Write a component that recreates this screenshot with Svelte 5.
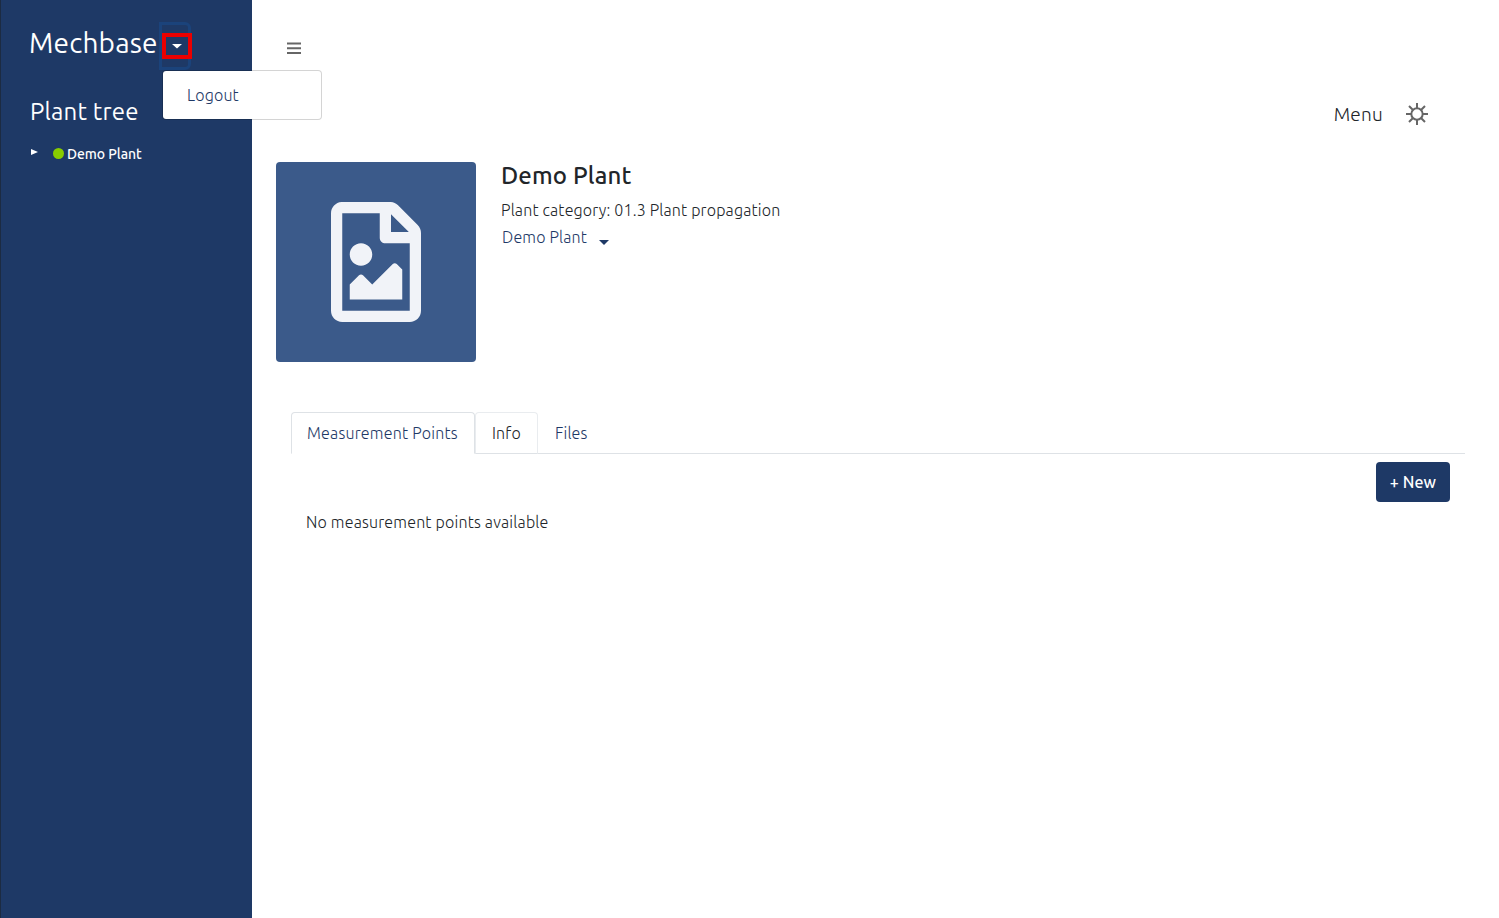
<script>
  let menuOpen = $state(true);
  let tab = $state('Measurement Points');
</script>

<div class="app">
  <aside>
    <div class="brand">
      <span class="name">Mechbase</span>
      <button class="toggle" aria-label="Account" onclick={() => (menuOpen = !menuOpen)}>
        <span class="mark"><svg width="10" height="5" viewBox="0 0 10 5"><path d="M0 0H10L5 4.6Z" /></svg></span>
      </button>
      {#if menuOpen}
        <div class="dropdown"><a href="#logout">Logout</a></div>
      {/if}
    </div>
    <h2>Plant tree</h2>
    <div class="node">
      <svg class="arrow" width="7" height="6" viewBox="0 0 7 6"><path d="M0 0L7 3L0 6Z" /></svg>
      <span class="dot"></span>
      <span class="label">Demo Plant</span>
    </div>
  </aside>

  <main>
    <svg class="burger" width="14" height="12" viewBox="0 0 14 12"><path d="M0 .5h14v2H0zM0 5.2h14v2H0zM0 9.9h14v2H0z" /></svg>
    <div class="menu">
      <span>Menu</span>
      <svg width="22" height="22" viewBox="0 0 22 22">
        <circle cx="11" cy="11" r="5.7" />
        <path d="M11 0V5.5M11 16.5V22M0 11H5.5M16.5 11H22M3 3L7 7M15 15L19 19M19 3L15 7M7 15L3 19" />
      </svg>
    </div>

    <section class="plant">
      <div class="picture">
        <svg width="90" height="120" viewBox="0 0 384 512"><path d="M369.9 97.9L286 14C277 5 264.8-.1 252.1-.1H48C21.5 0 0 21.5 0 48v416c0 26.5 21.5 48 48 48h288c26.5 0 48-21.5 48-48V131.9c0-12.7-5.1-25-14.1-34zM332.1 128H256V51.9l76.1 76.1zM48 464V48h160v104c0 13.3 10.7 24 24 24h104v288H48zm32-48h224V288l-23.5-23.5c-4.7-4.7-12.3-4.7-17 0L176 352l-39.5-39.5c-4.7-4.7-12.3-4.7-17 0L80 352v64zm48-240c-26.5 0-48 21.5-48 48s21.5 48 48 48 48-21.5 48-48-21.5-48-48-48z" /></svg>
      </div>
      <div class="facts">
        <h1>Demo Plant</h1>
        <p>Plant category: 01.3 Plant propagation</p>
        <a class="crumb" href="#plant"><span>Demo Plant</span><svg width="10" height="5" viewBox="0 0 10 5"><path d="M0 0H10L5 5Z" /></svg></a>
      </div>
    </section>

    <nav>
      {#each ['Measurement Points', 'Info', 'Files'] as t, i}
        <button class="tab t{i}" class:active={tab === t} onclick={() => (tab = t)}><span>{t}</span></button>
      {/each}
    </nav>
    <div class="actions"><button class="new"><span>+ New</span></button></div>
    <p class="empty">No measurement points available</p>
  </main>
</div>

<style>
  :global(body) { background: #fff; }
  .app {
    display: flex;
    height: 918px;
    overflow: hidden;
    font: 300 16px/24px Ubuntu, "Noto Sans", sans-serif;
    letter-spacing: 0.17px;
    color: #212529;
  }
  .app * { box-sizing: border-box; }
  h1, h2, p { margin: 0; }
  svg { display: block; flex: none; }
  button { font: inherit; letter-spacing: inherit; margin: 0; padding: 0; border: 0; background: none; white-space: nowrap; }
  a { text-decoration: none; color: #1e3966; }
  aside {
    flex: none;
    width: 252px;
    padding-top: 22px;
    background: #1e3966;
    border-left: 1px solid #1c2b42;
    color: #fff;
  }
  .brand { position: relative; display: flex; height: 48px; padding-left: 28px; }
  .name { width: 130px; font-size: 28px; line-height: 41px; font-weight: 400; letter-spacing: 0.2px; white-space: nowrap; }
  .toggle {
    flex: none;
    width: 32px;
    height: 48px;
    border: 3px solid #1b437b;
    border-radius: 0 6px 6px 0;
  }
  .mark {
    display: flex;
    align-items: center;
    justify-content: center;
    width: 30px;
    height: 26px;
    border: 4px solid #eb0000;
    fill: #fff;
  }
  .dropdown {
    position: absolute;
    z-index: 2;
    left: 161px;
    top: 48px;
    width: 160px;
    height: 50px;
    padding: 12px 0 0 24px;
    background: #fff;
    background-clip: padding-box;
    border: 1px solid rgba(0, 0, 0, 0.17);
    border-radius: 4px;
  }
  h2 { margin-top: 27px; padding-left: 29px; font-size: 24px; line-height: 30px; font-weight: 400; letter-spacing: 0.2px; }
  .node { display: flex; align-items: center; height: 20px; margin-top: 17px; padding-left: 30px; font-size: 14px; font-weight: 500; }
  .arrow { fill: #fff; margin-top: -4px; }
  .dot { width: 11px; height: 11px; margin: -1px 3px 0 15px; border-radius: 50%; background: #8c0; }
  .label { letter-spacing: -0.05px; }
  main { flex: 1; min-width: 0; padding: 42px 34px 0 24px; }
  .burger { margin-left: 11px; fill: #666; }
  .menu { display: flex; justify-content: flex-end; align-items: center; gap: 23px; height: 24px; margin-top: 48px; padding-right: 37px; }
  .menu span { font-size: 19px; letter-spacing: 0.25px; }
  .menu svg { fill: none; stroke: #666; stroke-width: 2; }
  .plant { display: flex; margin-top: 36px; height: 200px; }
  .picture { display: flex; align-items: center; justify-content: center; width: 200px; border-radius: 4px; background: #3b5a8a; fill: #f1f3f8; }
  .facts { padding-left: 25px; white-space: nowrap; }
  h1 { font-size: 24px; line-height: 29px; margin-top: -1px; font-weight: 500; letter-spacing: 0.15px; }
  .facts p { margin-top: 8px; }
  .crumb { display: flex; align-items: center; padding-left: 1px; margin-top: 3px; gap: 12px; fill: #1e3966; }
  .crumb svg { margin-top: 10px; }
  nav { display: flex; height: 42px; margin: 50px 0 0 15px; border-bottom: 1px solid #dee2e6; }
  .tab { height: 42px; border: 1px solid transparent; border-radius: 4px 4px 0 0; color: #1e3966; text-align: left; padding-left: 15px; }
  .t0 { width: 184px; letter-spacing: 0.22px; }
  .t1 { width: 63px; padding-left: 16px; color: #212529; border-color: #e9ecef #e9ecef #dee2e6; }
  .t2 { width: 66px; padding-left: 16px; }
  .active { border-color: #dee2e6 #dee2e6 #fff; background: #fff; }
  .actions { display: flex; justify-content: flex-end; padding: 8px 15px 0 0; }
  .new { width: 74px; height: 40px; border-radius: 4px; background: #1e3966; color: #fff; font-size: 16px; font-weight: 500; letter-spacing: 0.1px; }
  .empty { margin: 8px 0 0 30px; letter-spacing: 0.19px; }
</style>
